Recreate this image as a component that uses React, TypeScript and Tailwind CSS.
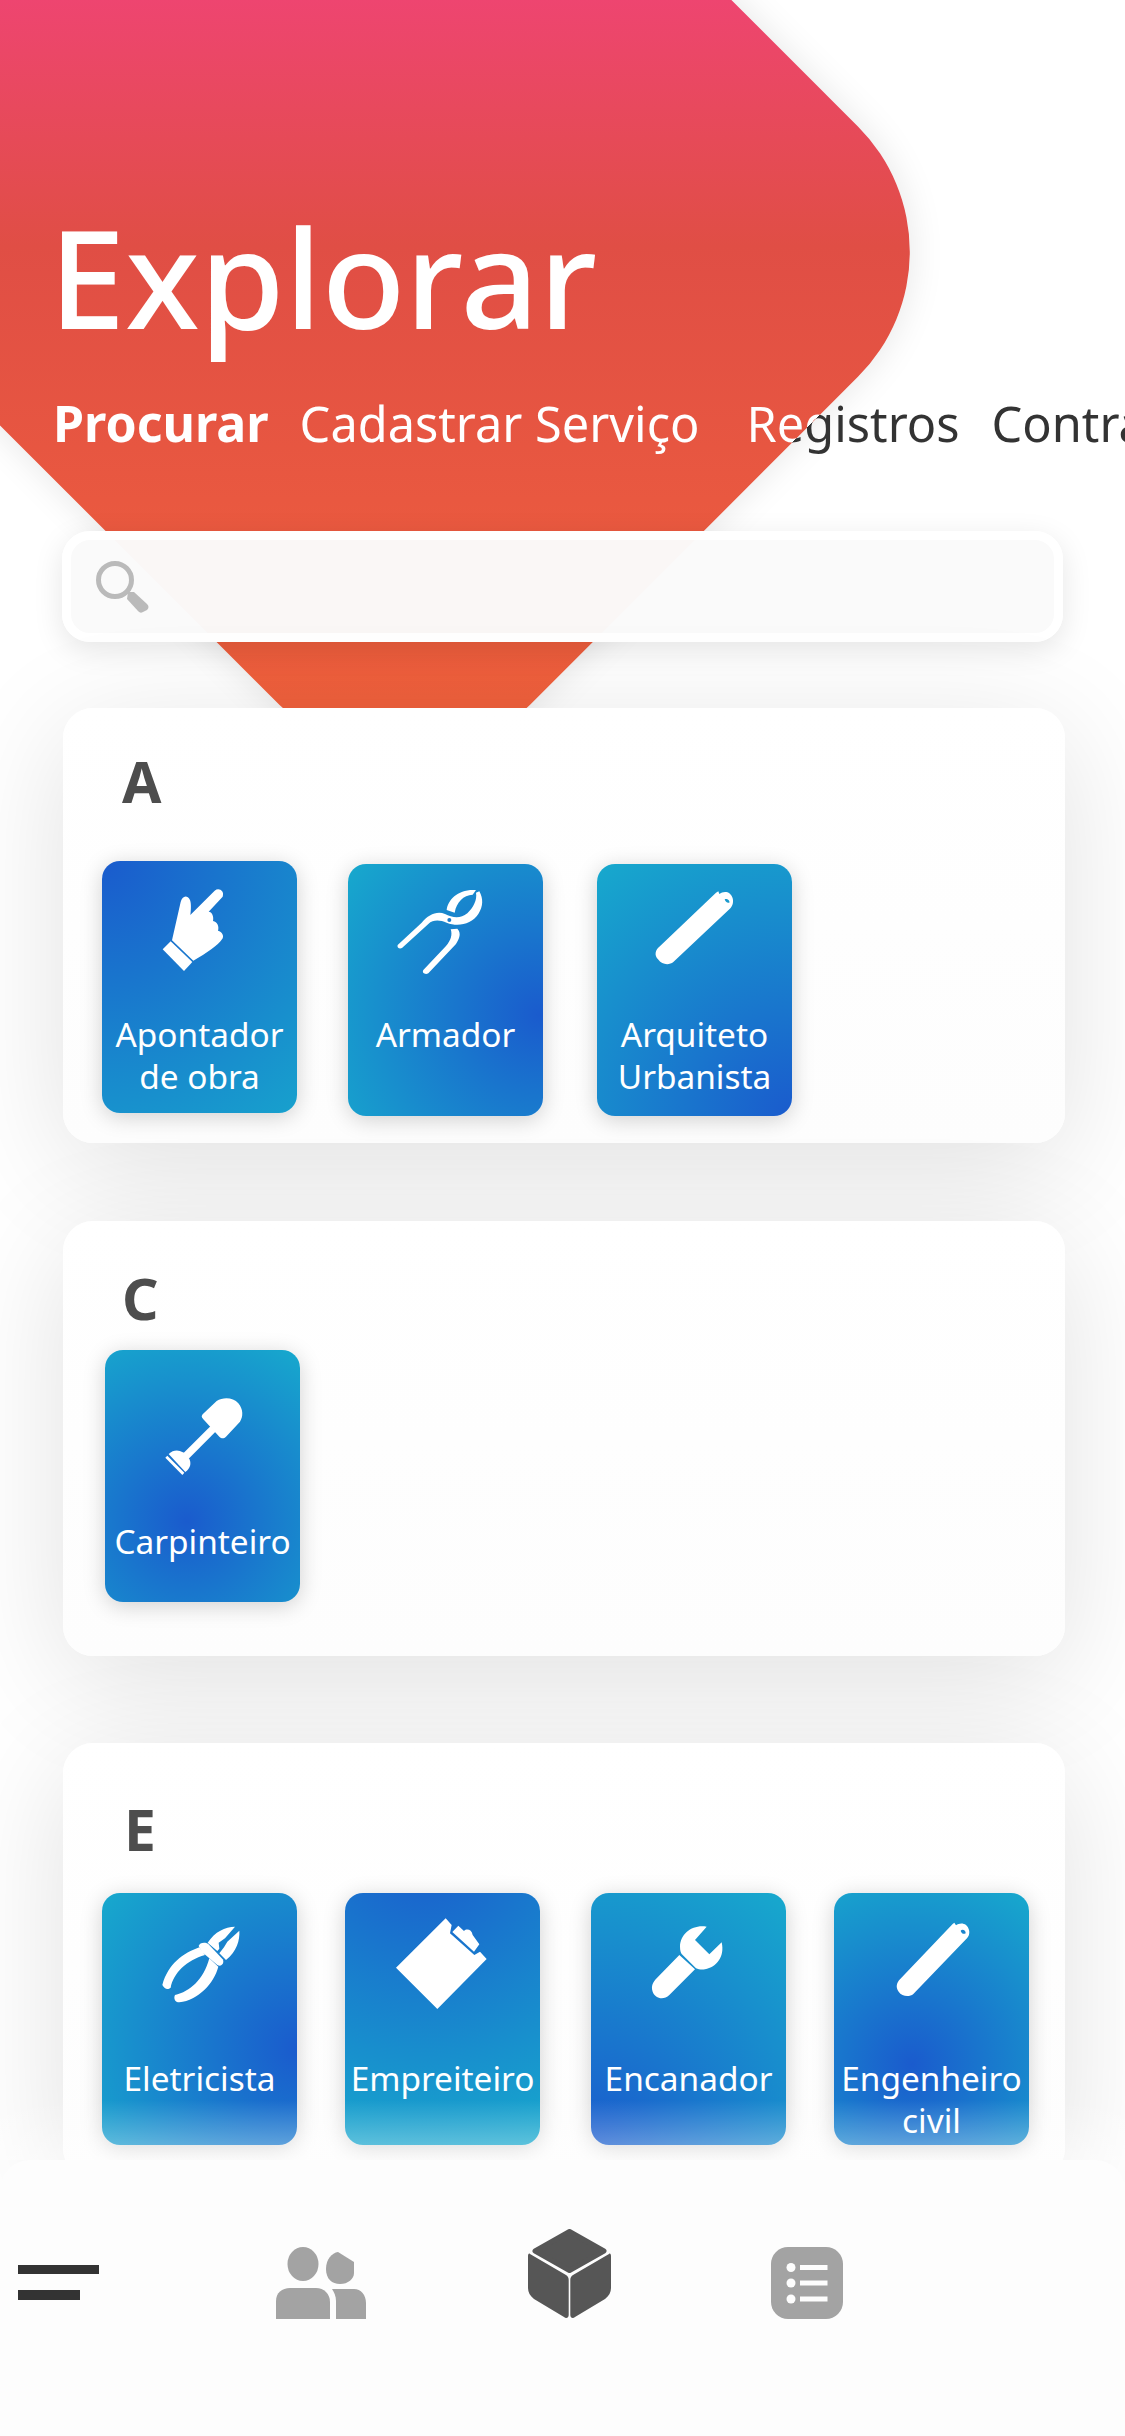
const WHITE = "#ffffff";

function HandIcon() {
    return (
        <g transform="translate(114,27)" fill={WHITE}>
            <path d="M96 211 L122 96 C126 80 140 72 150 90 C154 100 153 120 151 135 L224 62 C236 52 254 62 248 80 L206 125 C216 125 222 140 219 153 C232 155 238 170 234 182 C246 185 254 198 246 208 C235 225 200 250 160 272 Z" />
            <path d="M68 238 L92 214 L157 276 L132 303 Z" />
        </g>
    );
}

function PincerIcon() {
    return (
        <g transform="translate(96,18)" fill={WHITE}>
            <path d="M53 225 L125 158 C145 135 170 122 195 132 C215 142 240 148 262 130 C280 112 292 90 288 68 L298 64 C310 85 310 110 295 132 C275 162 235 172 200 158 C180 150 160 148 145 162 L66 234 C58 238 50 232 53 225 Z" />
            <path d="M200 120 C204 88 235 56 288 60 L278 74 C250 76 230 95 224 128 Z" />
            <path d="M130 300 L198 228 C212 212 218 195 212 178 L232 176 C245 190 238 205 228 222 L145 310 C135 315 125 308 130 300 Z" />
            <circle cx="208" cy="150" r="6" fill="#1a7ccd" />
        </g>
    );
}

function PencilIcon({ variant }: { variant: "a" | "b" }) {
    if (variant === "a") {
        return (
            <g transform="translate(-651,18)" fill={WHITE}>
                <path d="M1008 68 L1015 64 L1018 72 C1030 62 1052 62 1058 85 C1062 100 1055 112 1048 118 L880 276 C868 286 846 285 834 268 C822 255 826 240 838 230 Z" />
                <path d="M1034 88 C1040 84 1050 90 1048 98 C1042 100 1036 96 1034 88 Z" fill="#1a9acd" />
            </g>
        );
    }
    return (
        <g transform="translate(-612,51)" fill={WHITE}>
            <path d="M968 42 L973 38 L978 46 C990 36 1012 38 1017 60 C1020 72 1015 82 1008 88 L850 252 C838 262 816 260 806 245 C796 232 800 218 810 208 Z" />
            <path d="M992 62 C998 56 1008 62 1007 70 C1000 74 994 70 992 62 Z" fill="#1a85cd" />
        </g>
    );
}

function ShovelIcon() {
    return (
        <g transform="translate(-135,-390)" fill={WHITE}>
            <path d="M428 583 L470 543 C490 530 520 532 535 550 C550 568 550 590 540 605 L498 650 C490 658 484 655 478 650 L430 598 C424 592 424 588 428 583 Z" />
            <path d="M452 618 L468 634 L386 716 L370 700 Z" />
            <path d="M326 702 C345 685 368 690 385 712 C396 728 392 745 376 756 Z" />
            <path d="M316 713 L322 707 L373 758 L367 765 Z" />
        </g>
    );
}

function PliersIcon() {
    return (
        <g transform="translate(114,51)" fill={WHITE}>
            <path d="M203 98 C225 65 255 50 285 50 L255 85 L236 98 L238 116 L232 123 Z" />
            <path d="M298 62 C300 90 290 125 258 150 L238 130 L252 112 L262 95 Z" />
            <path d="M176 108 C178 98 195 95 205 102 L248 148 C254 158 245 172 232 165 L185 125 Z" />
            <path d="M178 112 C130 130 85 160 67 225 C75 240 85 238 92 233 C100 190 140 150 195 135 Z" />
            <path d="M235 170 C222 220 175 270 118 277 C105 277 100 265 105 255 C150 245 190 210 208 145 Z" />
        </g>
    );
}

function ClipboardIcon() {
    return (
        <g transform="translate(-615,51)" fill={WHITE}>
            <path d="M917 25 L935 45 L930 70 L1003 135 L1020 125 L1040 147 L892 297 L768 173 Z" />
            <path d="M955 47 L972 63 C980 55 995 58 998 75 L1018 103 L1002 125 L937 66 Z" />
        </g>
    );
}

function WrenchIcon() {
    return (
        <g transform="translate(117,51)" fill={WHITE}>
            <path d="M230 50 C190 42 150 70 150 110 C150 122 153 128 155 132 L198 175 C205 178 215 180 225 178 C260 172 285 140 275 97 L238 133 L195 90 Z" />
            <path d="M148 135 L195 178 L118 255 C100 272 75 265 68 245 C62 228 70 215 80 205 Z" />
        </g>
    );
}

function Tile({ label, icon, className, gradient, labelClass }: { label: string[]; icon: React.ReactNode; className: string; gradient: string; labelClass: string }) {
    return (
        <div className={`w-[195px] h-[252px] shrink-0 rounded-[18px] shadow-[0_4px_22px_rgba(0,0,0,0.18)] ${gradient} ${className}`}>
            <svg viewBox="0 0 585 375" className="block w-[195px] h-[125px]">
                {icon}
            </svg>
            <div className={`text-center text-[33.4px] leading-[42px] text-white ${labelClass}`}>
                {label.map((l) => (
                    <div key={l} className="whitespace-nowrap">{l}</div>
                ))}
            </div>
        </div>
    );
}

function SearchBox() {
    return (
        <div className="ml-[62px] w-[1001px] h-[111px] rounded-[28px] border-[9px] border-white bg-[#fafafa]/98 flex items-center pl-[25px] shadow-[0_8px_30px_rgba(0,0,0,0.1)]">
            <svg viewBox="0 0 53 52" className="w-[53px] h-[52px]">
                <circle cx="19" cy="19" r="16.5" fill="none" stroke="#bababa" strokeWidth="5" />
                <path d="M32 31 L38 31 L51 43 C53 45 53 47 51 49 L47 51 C45 52 44 52 42 50 L31 38 Z" fill="#bababa" />
            </svg>
        </div>
    );
}

export default function App() {
    return (
        <div className="relative w-[1125px] h-[2436px] overflow-hidden bg-white font-['Noto_Sans',sans-serif]">
            {/* Hero shape */}
            <div className="absolute left-[-175px] top-[-228px] w-[1018px] h-[818px] rotate-45 rounded-r-[177px] bg-[linear-gradient(135deg,#ee4570_36%,#e04e45_55%,#f0603c_90%)] shadow-[0_0_36px_rgba(0,0,0,0.1)]" />

            <div className="relative">
                <h1 className="pt-[196px] pl-[49px] text-[137px] leading-[160px] font-medium text-white">Explorar</h1>

                <div className="mt-[34px] flex items-baseline whitespace-nowrap pl-[53px] text-[48.7px] leading-[66px] text-[#333333]">
                    <span className="text-[50px] font-bold text-white">Procurar</span>
                    <span className="ml-[31px] text-white">Cadastrar Serviço</span>
                    <span className="ml-[47px] bg-[linear-gradient(135deg,#ffffff_70px,#333333_70px)] bg-clip-text text-transparent">Registros</span>
                    <span className="ml-[32px]">Contratos</span>
                </div>

                <div className="mt-[75px]">
                    <SearchBox />
                </div>

                {/* A */}
                <section className="mt-[66px] ml-[63px] w-[1002px] h-[435px] rounded-[30px] bg-gradient-to-b from-white to-[#fdfdfd] pt-[43px] shadow-[0_24px_120px_rgba(0,0,0,0.12)]">
                    <div className="ml-[59px] text-[57px] leading-[60px] font-bold text-[#4d4d4d]">A</div>
                    <div className="flex items-start">
                        <Tile label={["Apontador", "de obra"]} icon={<HandIcon />} className="ml-[39px] mt-[50px]" labelClass="mt-[27px]" gradient="bg-[radial-gradient(circle_at_0%_0%,#1a5bcd,#17a9cd_112%)]" />
                        <Tile label={["Armador"]} icon={<PincerIcon />} className="ml-[51px] mt-[53px]" labelClass="mt-[24px]" gradient="bg-[radial-gradient(circle_at_98%_60%,#1a5bcd,#17a9cd)]" />
                        <Tile label={["Arquiteto", "Urbanista"]} icon={<PencilIcon variant="a" />} className="ml-[54px] mt-[53px]" labelClass="mt-[24px]" gradient="bg-[radial-gradient(circle_at_100%_100%,#1a5bcd,#17a9cd)]" />
                    </div>
                </section>

                {/* C */}
                <section className="mt-[78px] ml-[63px] w-[1002px] h-[435px] rounded-[30px] bg-gradient-to-b from-white to-[#fdfdfd] pt-[47px] shadow-[0_24px_120px_rgba(0,0,0,0.12)]">
                    <div className="ml-[59px] text-[57px] leading-[60px] font-bold text-[#4d4d4d]">C</div>
                    <div className="flex items-start">
                        <Tile label={["Carpinteiro"]} icon={<ShovelIcon />} className="ml-[42px] mt-[22px]" labelClass="mt-[45px]" gradient="bg-[radial-gradient(circle_at_42%_68%,#1a5bcd,#17a9cd)]" />
                    </div>
                </section>

                {/* E */}
                <section className="mt-[87px] ml-[63px] w-[1002px] h-[435px] rounded-[30px] bg-gradient-to-b from-white to-[#fdfdfd] pt-[56px] shadow-[0_24px_120px_rgba(0,0,0,0.12)]">
                    <div className="ml-[61px] text-[57px] leading-[60px] font-bold text-[#4d4d4d]">E</div>
                    <div className="flex items-start">
                        <Tile label={["Eletricista"]} icon={<PliersIcon />} className="ml-[39px] mt-[34px]" labelClass="mt-[39px]" gradient="bg-[radial-gradient(circle_at_100%_62%,#1a5bcd,#17a9cd)]" />
                        <Tile label={["Empreiteiro"]} icon={<ClipboardIcon />} className="ml-[48px] mt-[34px]" labelClass="mt-[39px]" gradient="bg-[radial-gradient(circle_at_40%_-20%,#1a5bcd,#17a9cd)]" />
                        <Tile label={["Encanador"]} icon={<WrenchIcon />} className="ml-[51px] mt-[34px]" labelClass="mt-[39px]" gradient="bg-[radial-gradient(circle_at_0%_100%,#1a5bcd,#17a9cd)]" />
                        <Tile label={["Engenheiro", "civil"]} icon={<PencilIcon variant="b" />} className="ml-[48px] mt-[34px]" labelClass="mt-[39px]" gradient="bg-[radial-gradient(circle_at_40%_68%,#1a5bcd,#17a9cd)]" />
                    </div>
                </section>
            </div>

            {/* Bottom nav */}
            <nav className="absolute bottom-0 left-0 w-[1125px] h-[276px] rounded-t-[30px] bg-[#fdfdfd]">
                <div className="absolute left-0 top-[-60px] w-full h-[60px] bg-gradient-to-b from-transparent to-white/40" />
                <div className="flex items-end pt-[69px]">
                    <div className="ml-[18px] mb-[19px] flex flex-col gap-[16px]">
                        <div className="h-[9px] w-[81px] bg-[#333333]" />
                        <div className="h-[10px] w-[62px] bg-[#333333]" />
                    </div>
                    <svg viewBox="0 0 90 72" className="ml-[177px] w-[90px] h-[72px]" fill="#a3a3a3">
                        <ellipse cx="27" cy="17" rx="15.5" ry="17" />
                        <path d="M62 5 L78 15 L78 26 C78 32 72 37 64 37 C56 37 50 32 50 22 C50 12 56 6 62 5 Z" />
                        <path d="M0 72 V54 C0 46 6 41 14 41 H40 C48 41 54 47 54 55 V72 Z" />
                        <path d="M56 42 H78 C85 42 90 48 90 56 V72 H60 V54 C60 49 58 45 56 42 Z" />
                    </svg>
                    <svg viewBox="0 0 83 90" className="ml-[162px] w-[83px] h-[90px]" fill="#565656">
                        <path d="M41.5 2.5 L76 22 L41.5 41.5 L7 22 Z" stroke="#565656" strokeWidth="5" strokeLinejoin="round" />
                        <path d="M2 25 L38 46 C40 47 40.7 49 40.7 51 V86 C40.7 89 38 90 36 88 L6 70 C2 67 0 63 0 59 V27 C0 25 1 24 2 25 Z" />
                        <path d="M81 25 L45 46 C43 47 42.3 49 42.3 51 V86 C42.3 89 45 90 47 88 L77 70 C81 67 83 63 83 59 V27 C83 25 82 24 81 25 Z" />
                    </svg>
                    <svg viewBox="0 0 72 72" className="ml-[160px] w-[72px] h-[72px]">
                        <rect width="72" height="72" rx="17" fill="#a3a3a3" />
                        <circle cx="20" cy="20.5" r="4.5" fill="#fdfdfd" />
                        <circle cx="20" cy="36" r="4.5" fill="#fdfdfd" />
                        <circle cx="20" cy="52" r="4.5" fill="#fdfdfd" />
                        <rect x="29" y="18" width="27.5" height="5" fill="#fdfdfd" />
                        <rect x="29" y="33.5" width="27.5" height="5" fill="#fdfdfd" />
                        <rect x="29" y="49.5" width="27.5" height="5" fill="#fdfdfd" />
                    </svg>
                </div>
            </nav>
        </div>
    );
}
